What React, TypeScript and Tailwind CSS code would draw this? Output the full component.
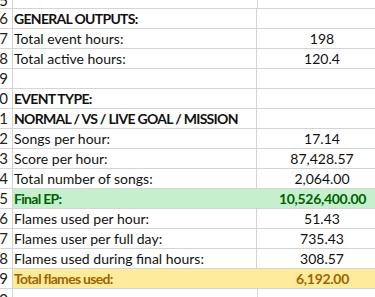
import React from "react";

type Row = {
  n: string;
  label?: string;
  value?: string;
  bold?: boolean;
  fill?: "green" | "yellow";
};

const rows: Row[] = [
  { n: "6", label: "GENERAL OUTPUTS:", bold: true },
  { n: "7", label: "Total event hours:", value: "198" },
  { n: "8", label: "Total active hours:", value: "120.4" },
  { n: "9" },
  { n: "0", label: "EVENT TYPE:", bold: true },
  { n: "1", label: "NORMAL / VS / LIVE GOAL / MISSION", bold: true },
  { n: "2", label: "Songs per hour:", value: "17.14" },
  { n: "3", label: "Score per hour:", value: "87,428.57" },
  { n: "4", label: "Total number of songs:", value: "2,064.00" },
  { n: "5", label: "Final EP:", value: "10,526,400.00", bold: true, fill: "green" },
  { n: "6", label: "Flames used per hour:", value: "51.43" },
  { n: "7", label: "Flames user per full day:", value: "735.43" },
  { n: "8", label: "Flames used during final hours:", value: "308.57" },
  { n: "9", label: "Total flames used:", value: "6,192.00", bold: true, fill: "yellow" },
];

export default function App() {
  return (
    <div
      className="w-[375px] h-[297px] overflow-hidden bg-white text-[14px] text-[#111]"
      style={{ fontFamily: "Lato, 'Liberation Sans', sans-serif" }}
    >
      <div className="flex h-[9px] border-b border-[#d4d4d4] overflow-hidden">
        <div className="w-[13px] shrink-0 border-r border-[#d4d4d4] flex items-end justify-end pr-[4px] leading-none -mt-[9px] text-[15px]">
          5
        </div>
        <div className="w-[245px] shrink-0 border-r border-[#d4d4d4]" />
        <div className="flex-1" />
      </div>
      {rows.map((r, i) => {
        const fillBg =
          r.fill === "green" ? "bg-[#c6efce]" : r.fill === "yellow" ? "bg-[#ffeb9c]" : "";
        const fillText =
          r.fill === "green" ? "text-[#006100]" : r.fill === "yellow" ? "text-[#9c6500]" : "";
        return (
          <div key={i} className="flex h-[20px] border-b border-[#d4d4d4]">
            <div className="w-[13px] shrink-0 border-r border-[#d4d4d4] flex items-end justify-end pr-[4px] pb-[2px] leading-none text-[15px] text-[#222]">
              {r.n}
            </div>
            <div className={`flex flex-1 ${fillBg} ${fillText}`}>
              <div
                className={`w-[244px] shrink-0 flex items-end pl-[1px] pb-[2px] leading-none whitespace-nowrap ${
                  r.fill ? "" : "border-r border-[#d4d4d4]"
                } ${r.bold ? "font-bold tracking-[-0.7px]" : ""}`}
              >
                {r.label}
              </div>
              <div
                className={`w-[130px] shrink-0 flex items-end justify-center pb-[2px] leading-none ${
                  r.fill ? "pl-[1px]" : ""
                } ${r.bold ? "font-bold tracking-[-0.3px]" : ""}`}
              >
                {r.value}
              </div>
            </div>
          </div>
        );
      })}
      <div className="flex h-[20px]">
        <div className="w-[13px] shrink-0 border-r border-[#d4d4d4] flex items-end justify-end pr-[4px] pb-[2px] leading-none text-[15px] text-[#222]">
          0
        </div>
        <div className="w-[245px] shrink-0 border-r border-[#d4d4d4]" />
        <div className="flex-1" />
      </div>
    </div>
  );
}
